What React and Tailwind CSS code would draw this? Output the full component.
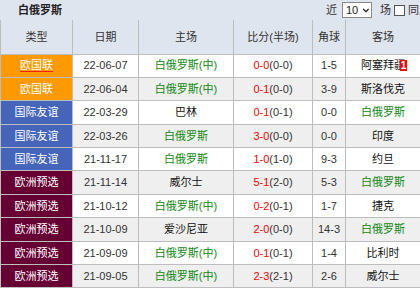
import { ChevronDown } from 'lucide-react';

const TYPES = {
    nl: { label: '欧国联', cls: 'bg-[#ff9900]' },
    fr: { label: '国际友谊', cls: 'bg-[#4565bb]' },
    eq: { label: '欧洲预选', cls: 'bg-[#660033]' },
};

const rows = [
    { t: 'nl', date: '22-06-07', home: '白俄罗斯(中)', hg: true, ft: '0-0', ht: '(0-0)', corner: '1-5', away: '阿塞拜疆', ag: false, card: '1', link: true },
    { t: 'nl', date: '22-06-04', home: '白俄罗斯(中)', hg: true, ft: '0-1', ht: '(0-0)', corner: '3-9', away: '斯洛伐克', ag: false },
    { t: 'fr', date: '22-03-29', home: '巴林', hg: false, ft: '0-1', ht: '(0-1)', corner: '0-0', away: '白俄罗斯', ag: true },
    { t: 'fr', date: '22-03-26', home: '白俄罗斯', hg: true, ft: '3-0', ht: '(0-0)', corner: '0-0', away: '印度', ag: false },
    { t: 'fr', date: '21-11-17', home: '白俄罗斯', hg: true, ft: '1-0', ht: '(1-0)', corner: '9-3', away: '约旦', ag: false },
    { t: 'eq', date: '21-11-14', home: '威尔士', hg: false, ft: '5-1', ht: '(2-0)', corner: '5-3', away: '白俄罗斯', ag: true },
    { t: 'eq', date: '21-10-12', home: '白俄罗斯(中)', hg: true, ft: '0-2', ht: '(0-1)', corner: '1-7', away: '捷克', ag: false },
    { t: 'eq', date: '21-10-09', home: '爱沙尼亚', hg: false, ft: '2-0', ht: '(0-0)', corner: '14-3', away: '白俄罗斯', ag: true },
    { t: 'eq', date: '21-09-09', home: '白俄罗斯(中)', hg: true, ft: '0-1', ht: '(0-1)', corner: '1-4', away: '比利时', ag: false },
    { t: 'eq', date: '21-09-05', home: '白俄罗斯(中)', hg: true, ft: '2-3', ht: '(2-1)', corner: '2-6', away: '威尔士', ag: false },
];

const td = 'border border-[#bdbdbd] text-center align-middle p-0 whitespace-nowrap';

export default function App() {
    return (
        <div className="w-[420px] h-[290px] overflow-hidden bg-white text-[11px] text-[#333] font-['Liberation_Sans','Noto_Sans_CJK_SC',sans-serif]">
            <div className="flex items-center h-[21px] bg-[#dfe5ee] border-b border-[#bdbdbd] whitespace-nowrap">
                <span className="w-[326px] shrink-0 pl-[18px] font-bold text-[#222]">白俄罗斯</span>
                <span className="shrink-0">近</span>
                <div className="shrink-0 ml-[5px] flex items-center w-[30px] h-[16px] bg-white border border-[#888] pl-[3px] text-[#222]">
                    10
                    <ChevronDown className="w-[11px] h-[11px] ml-[3px]" strokeWidth={3} />
                </div>
                <span className="shrink-0 ml-[8px]">场</span>
                <span className="shrink-0 ml-[3px] w-[11px] h-[11px] bg-white border border-[#555]" />
                <span className="shrink-0 ml-[3px]">同主客</span>
            </div>
            <table className="w-[420px] table-fixed border-collapse -mt-px">
                <colgroup>
                    <col className="w-[72px]" />
                    <col className="w-[66px]" />
                    <col className="w-[95px]" />
                    <col className="w-[79px]" />
                    <col className="w-[33px]" />
                    <col className="w-[75px]" />
                </colgroup>
                <thead>
                    <tr className="h-[34px] bg-[#dfe5ee]">
                        {['类型', '日期', '主场', '比分(半场)', '角球', '客场'].map((h) => (
                            <th key={h} className={`${td} font-normal border-t-0`}>{h}</th>
                        ))}
                    </tr>
                </thead>
                <tbody>
                    {rows.map((r, i) => (
                        <tr key={i} className={`h-[23.4px] ${i % 2 ? 'bg-[#efefef]' : 'bg-white'}`}>
                            <td className={`${td} text-white ${TYPES[r.t].cls}`}>
                                <span className={r.link ? 'underline decoration-[#ff2200] underline-offset-2' : ''}>{TYPES[r.t].label}</span>
                            </td>
                            <td className={td}>{r.date}</td>
                            <td className={`${td} ${r.hg ? 'text-[#118811]' : 'text-[#111]'}`}>{r.home}</td>
                            <td className={td}>
                                <span className="text-[#ff0000]">{r.ft}</span>
                                {r.ht}
                            </td>
                            <td className={td}>{r.corner}</td>
                            <td className={`${td} ${r.ag ? 'text-[#118811]' : 'text-[#111]'}`}>
                                <span className="relative">
                                    {r.away}
                                    {r.card && (
                                        <span className="absolute right-[-2px] top-[1px] w-[7px] h-[11px] bg-[#ff0000] text-white font-bold text-[10px] leading-[11px] text-center">
                                            {r.card}
                                        </span>
                                    )}
                                </span>
                            </td>
                        </tr>
                    ))}
                </tbody>
            </table>
        </div>
    );
}
